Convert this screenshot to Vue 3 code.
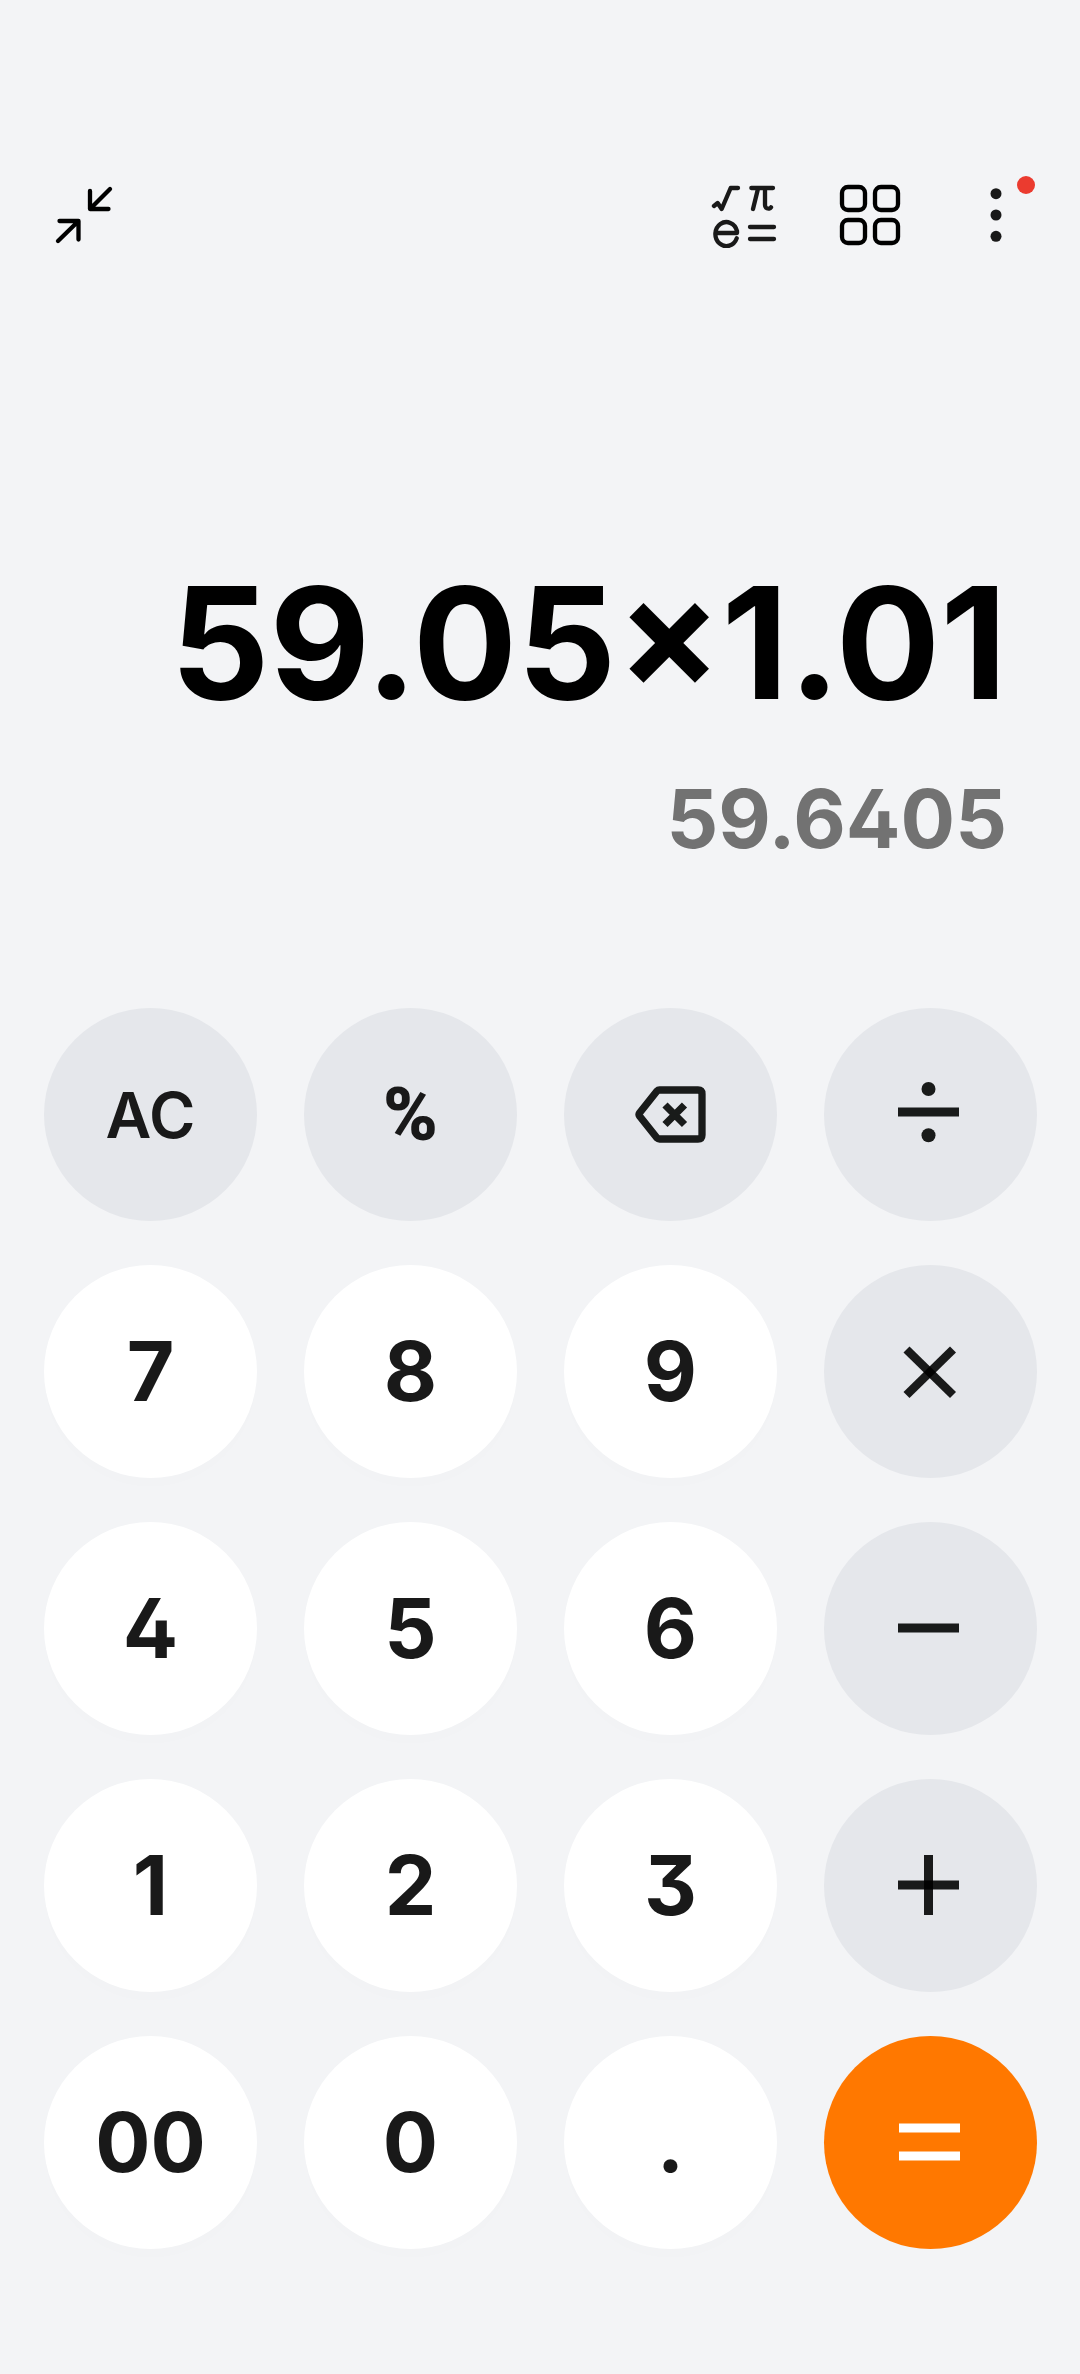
<script setup>
import { ref, computed } from 'vue'

const expression = ref('59.05×1.01')

const keys = [
  { id: 'clear', label: 'AC', type: 'function' },
  { id: 'percent', label: '%', type: 'function percent' },
  { id: 'backspace', name: 'Backspace', type: 'function' },
  { id: 'divide', name: 'Divide', value: '÷', type: 'function' },
  { id: '7', label: '7', type: 'digit' },
  { id: '8', label: '8', type: 'digit' },
  { id: '9', label: '9', type: 'digit' },
  { id: 'multiply', name: 'Multiply', value: '×', type: 'function' },
  { id: '4', label: '4', type: 'digit' },
  { id: '5', label: '5', type: 'digit' },
  { id: '6', label: '6', type: 'digit' },
  { id: 'minus', name: 'Subtract', value: '−', type: 'function' },
  { id: '1', label: '1', type: 'digit' },
  { id: '2', label: '2', type: 'digit' },
  { id: '3', label: '3', type: 'digit' },
  { id: 'plus', name: 'Add', value: '+', type: 'function' },
  { id: '00', label: '00', type: 'digit' },
  { id: '0', label: '0', type: 'digit' },
  { id: 'point', label: '.', type: 'digit' },
  { id: 'equals', name: 'Equals', type: 'equals' },
]

// evaluates left to right, multiplication and division first
function evaluate(text) {
  const tokens = text.match(/[\d.]+%?|[÷×−+]/g) || []
  const terms = []
  let op = '+'
  for (const token of tokens) {
    if ('÷×−+'.includes(token)) {
      op = token
      continue
    }
    const n = token.endsWith('%') ? parseFloat(token) / 100 : parseFloat(token)
    if (op === '×') terms.push(terms.pop() * n)
    else if (op === '÷') terms.push(terms.pop() / n)
    else terms.push(op === '−' ? -n : n)
  }
  return terms.reduce((a, b) => a + b, 0)
}

const result = computed(() => String(parseFloat(evaluate(expression.value).toPrecision(10))))

function press(key) {
  if (key.id === 'clear') {
    expression.value = '0'
  } else if (key.id === 'backspace') {
    expression.value = expression.value.slice(0, -1) || '0'
  } else if (key.id === 'equals') {
    expression.value = result.value
  } else if (expression.value === '0' && key.type === 'digit' && key.id !== 'point') {
    expression.value = key.label
  } else {
    expression.value += key.value || key.label
  }
}
</script>

<template>
  <main class="calculator">
    <header class="toolbar">
      <button type="button" class="tool" aria-label="Minimize">
        <svg class="tool-icon" viewBox="0 0 66 66" fill="none">
          <path
            d="M39 9V27H57.5M39.5 26.5L59 7M8.5 39H27.5V57.5M27 39.5L7 59"
            stroke="#000000"
            stroke-width="4.3"
            stroke-linecap="round"
            stroke-linejoin="round"
          />
        </svg>
      </button>
      <div class="tool-group">
        <button type="button" class="tool" aria-label="Scientific">
          <svg class="tool-icon" viewBox="63 66 198 198" fill="none">
            <g stroke="#191919" stroke-width="13" stroke-linecap="round" stroke-linejoin="round">
              <path d="M72 138L83 129L95 147L122 84H144" />
              <path d="M184 84H249M204 86L189 147M225 86V134Q225 147 237 146Q241 145 243 142" />
              <path d="M76 219H141V213A33 36 0 1 0 140 235" />
              <path d="M180 201H252M180 237H252" />
            </g>
          </svg>
        </button>
        <button type="button" class="tool" aria-label="Converters">
          <svg class="tool-icon" viewBox="441 66 198 198" fill="none">
            <g stroke="#000000" stroke-width="13">
              <rect x="456" y="81" width="69" height="69" rx="18" />
              <rect x="555" y="81" width="69" height="69" rx="18" />
              <rect x="456" y="180" width="69" height="69" rx="18" />
              <rect x="555" y="180" width="69" height="69" rx="18" />
            </g>
          </svg>
        </button>
        <button type="button" class="tool" aria-label="More options">
          <svg class="tool-icon" viewBox="0 0 66 66" fill="#191919">
            <circle cx="33" cy="11.7" r="5.5" />
            <circle cx="33" cy="33" r="5.5" />
            <circle cx="33" cy="54.3" r="5.5" />
          </svg>
          <span class="badge" />
        </button>
      </div>
    </header>

    <section class="display" aria-live="polite">
      <div class="expression">{{ expression }}</div>
      <div class="result">{{ result }}</div>
    </section>

    <section class="keypad">
      <button
        v-for="key in keys"
        :key="key.id"
        type="button"
        class="key"
        :class="key.type"
        :aria-label="key.name"
        @click="press(key)"
      >
        <template v-if="key.label">{{ key.label }}</template>
        <svg v-else class="key-icon" viewBox="0 0 213 213" fill="none">
          <template v-if="key.id === 'backspace'">
            <path
              d="M95.5 82H134Q138 82 138 86V127Q138 131 134 131H95.5Q94 131 93 130L75.5 108Q74.5 106.5 75.5 105L93 83Q94 82 95.5 82Z"
              stroke="#191b1a"
              stroke-width="7.3"
              stroke-linejoin="round"
            />
            <path d="M101 97L120.5 116.5M120.5 97L101 116.5" stroke="#191b1a" stroke-width="7.3" />
          </template>
          <template v-else-if="key.id === 'divide'">
            <path d="M74 104H135" stroke="#191b1a" stroke-width="9" />
            <circle cx="104.5" cy="81" r="7" fill="#191b1a" />
            <circle cx="104.5" cy="127.3" r="7" fill="#191b1a" />
          </template>
          <!-- the two bars are translucent, so they darken where they cross -->
          <g v-else-if="key.id === 'multiply'" stroke="#000000" stroke-opacity="0.89" stroke-width="8.6">
            <path d="M82.5 84.5L129 130" />
            <path d="M129 84.5L82.5 130" />
          </g>
          <path v-else-if="key.id === 'minus'" d="M74 106H135" stroke="#191b1a" stroke-width="9" />
          <g v-else-if="key.id === 'plus'" stroke="#000000" stroke-opacity="0.89" stroke-width="9">
            <path d="M74 106H135" />
            <path d="M104.5 76V136" />
          </g>
          <path v-else d="M75 92H136M75 120H136" stroke="#ffffff" stroke-width="9" />
        </svg>
      </button>
    </section>
  </main>
</template>

<style>
body {
  background: #f3f4f6;
}
</style>

<style scoped>
.calculator {
  display: flex;
  flex-direction: column;
  min-height: 100vh;
  box-sizing: border-box;
  padding: 152px 0 125px;
  background: #f3f4f6;
  font-family: Inter, "Noto Sans", sans-serif;
  font-feature-settings: "cv02", "cv09";
}

button {
  margin: 0;
  padding: 0;
  border: none;
  background: none;
  font: inherit;
  font-feature-settings: inherit;
  cursor: pointer;
}

.toolbar {
  display: flex;
  justify-content: space-between;
  padding: 0 21px;
}

.tool-group {
  display: flex;
}

.tool {
  position: relative;
  display: flex;
  align-items: center;
  justify-content: center;
  width: 126px;
  height: 126px;
}

.tool-icon {
  width: 66px;
  height: 66px;
}

.badge {
  position: absolute;
  top: 24px;
  right: 24px;
  width: 18px;
  height: 18px;
  border-radius: 50%;
  background: #eb3b2f;
}

.display {
  flex: 1;
  display: flex;
  flex-direction: column;
  justify-content: flex-end;
  align-items: flex-end;
  gap: 26px;
  padding: 0 73px 139px;
}

.expression {
  font-size: 155px;
  font-weight: 700;
  line-height: 200px;
  color: #000000;
}

.result {
  font-size: 81px;
  font-weight: 700;
  line-height: 100px;
  color: #727272;
}

.keypad {
  display: grid;
  grid-template-columns: repeat(4, 1fr);
  gap: 44px 47px;
  padding: 0 43px 0 44px;
}

.key {
  display: flex;
  align-items: center;
  justify-content: center;
  aspect-ratio: 1;
  border-radius: 50%;
  color: #191919;
}

.key.digit {
  background: #ffffff;
  box-shadow: 0 10px 40px rgba(0, 0, 0, 0.008);
  font-size: 82px;
  font-weight: 700;
}

.key.function {
  background: #e5e7eb;
  font-size: 63px;
  font-weight: 600;
}

.key.percent {
  font-family: Roboto, sans-serif;
  font-size: 74px;
  font-weight: 900;
}

.key.equals {
  background: #ff7800;
}

.key-icon {
  width: 100%;
  height: 100%;
}
</style>
